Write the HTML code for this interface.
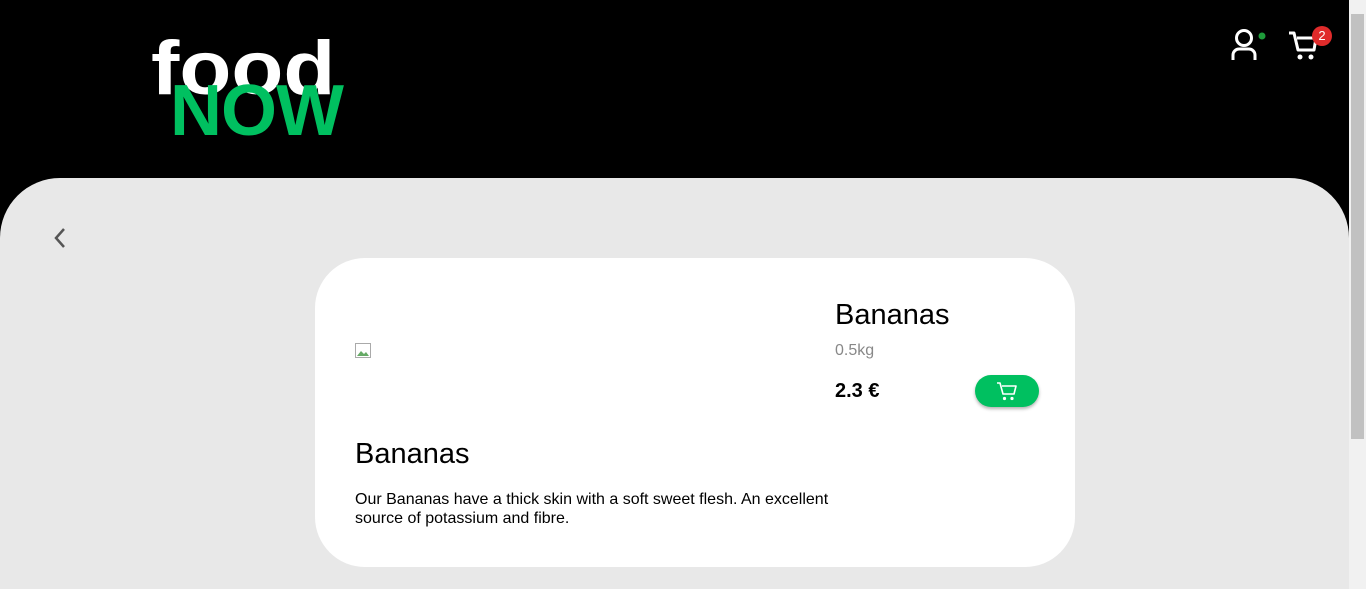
<!DOCTYPE html>
<html style="overflow:hidden"><head><style>
body{margin:0;width:1366px;height:589px;overflow:hidden;background:#000;font-family:"Liberation Sans",sans-serif;position:relative}
.sb{position:absolute;right:0;top:0;width:17px;height:589px;background:#f1f1f1}
.sb .th{position:absolute;left:2px;top:14px;width:13px;height:425px;background:#c1c1c1}
.food{position:absolute;left:151px;top:31px;color:#fff;font-weight:bold;font-size:76px;letter-spacing:0px;line-height:76px;transform:scaleX(1.12);transform-origin:left top}
.now{position:absolute;left:170px;top:75px;color:#00c060;font-weight:bold;font-size:72px;letter-spacing:-1px;line-height:72px}
.panel{position:absolute;left:0;top:178px;width:1349px;height:411px;background:#e8e8e8;border-radius:60px 60px 0 0}
.card{position:absolute;left:315px;top:258px;width:760px;height:309px;background:#fff;border-radius:50px}
.t{position:absolute;color:#000}
.btn{position:absolute;left:975px;top:375px;width:64px;height:32px;border-radius:16px;background:#00c060;box-shadow:0 2px 3px rgba(0,0,0,.3)}
</style></head><body>
<div class="food">food</div>
<div class="now">NOW</div>
<svg style="position:absolute;left:1230px;top:28px" width="40" height="34" viewBox="0 0 40 34"><circle cx="14" cy="10" r="7.5" fill="none" stroke="#fff" stroke-width="3"/><path d="M3 32v-5a6 6 0 0 1 6-6h10a6 6 0 0 1 6 6v5" fill="none" stroke="#fff" stroke-width="3"/><circle cx="32" cy="8" r="3.5" fill="#1e9b3a"/></svg>
<svg style="position:absolute;left:1288px;top:30px" width="32" height="32" viewBox="0 0 32 32"><path d="M1 3h5l4 17h16l2-12H9" fill="none" stroke="#fff" stroke-width="3" stroke-linejoin="round"/><circle cx="12" cy="27" r="2.5" fill="#fff"/><circle cx="23" cy="27" r="2.5" fill="#fff"/></svg>
<div style="position:absolute;left:1312px;top:26px;width:20px;height:20px;border-radius:50%;background:#e02b2b;color:#fff;font-size:13px;text-align:center;line-height:20px">2</div>
<div class="panel"></div>
<svg style="position:absolute;left:52px;top:227px" width="16" height="22" viewBox="0 0 16 22"><path d="M12 2L4 11l8 9" fill="none" stroke="#555" stroke-width="2.5"/></svg>
<div class="card"></div>
<svg style="position:absolute;left:355px;top:343px" width="16" height="15"><rect x=".5" y=".5" width="15" height="14" fill="none" stroke="#aaa"/><path d="M2 13l4-5 3 3 2-2 3 4z" fill="#6a6"/></svg>
<div class="t" style="left:835px;top:299px;font-size:29px">Bananas</div>
<div class="t" style="left:835px;top:342px;font-size:16px;color:#888">0.5kg</div>
<div class="t" style="left:835px;top:380px;font-size:20px;font-weight:bold">2.3 €</div>
<div class="btn"><svg style="position:absolute;left:21px;top:6px" width="22" height="21" viewBox="0 0 22 21"><path d="M1 2h3l3 11h11l2-8H6" fill="none" stroke="#fff" stroke-width="1.6" stroke-linejoin="round"/><circle cx="8.5" cy="17.5" r="1.6" fill="#fff"/><circle cx="16" cy="17.5" r="1.6" fill="#fff"/></svg></div>
<div class="t" style="left:355px;top:438px;font-size:29px">Bananas</div>
<div class="t" style="left:355px;top:490px;font-size:16px;line-height:19px;width:490px">Our Bananas have a thick skin with a soft sweet flesh. An excellent source of potassium and fibre.</div>
<div class="sb"><div class="th"></div></div>
</body></html>
